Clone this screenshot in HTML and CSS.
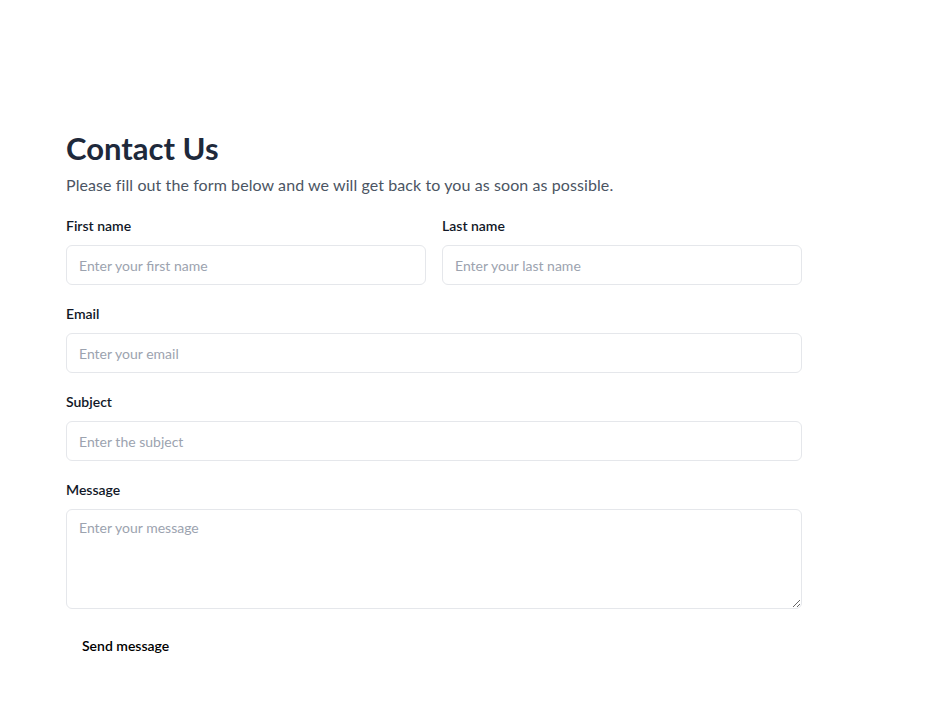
FILE: index.html
```html
<!DOCTYPE html>
<html lang="en">
<head>
<meta charset="utf-8">
<title>Contact Us</title>
<link rel="stylesheet" href="styles.css">
</head>
<body>
<main class="page">
  <h1 class="title">Contact Us</h1>
  <p class="subtitle">Please fill out the form below and we will get back to you as soon as possible.</p>
  <form class="form">
    <div class="row">
      <div class="field">
        <label class="label" for="first">First name</label>
        <input class="input" id="first" type="text" placeholder="Enter your first name">
      </div>
      <div class="field">
        <label class="label" for="last">Last name</label>
        <input class="input" id="last" type="text" placeholder="Enter your last name">
      </div>
    </div>
    <div class="field">
      <label class="label" for="email">Email</label>
      <input class="input" id="email" type="email" placeholder="Enter your email">
    </div>
    <div class="field">
      <label class="label" for="subject">Subject</label>
      <input class="input" id="subject" type="text" placeholder="Enter the subject">
    </div>
    <div class="field">
      <label class="label" for="message">Message</label>
      <textarea class="input textarea" id="message" placeholder="Enter your message"></textarea>
    </div>
    <div class="actions">
      <button class="button" type="submit">Send message</button>
    </div>
  </form>
</main>
</body>
</html>
```

FILE: styles.css
```css
* { box-sizing: border-box; }

html, body {
  margin: 0;
  padding: 0;
  background: #ffffff;
}

body {
  font-family: "Lato", "Noto Sans", sans-serif;
  color: #111827;
}

.page {
  width: 736px;
  margin: 0 0 0 66px;
  padding-top: 130px;
}

.title {
  margin: 0;
  font-size: 31px;
  line-height: 36px;
  font-weight: 700;
  color: #1e293b;
}

.subtitle {
  margin: 7px 0 0;
  font-size: 16px;
  line-height: 24px;
  letter-spacing: 0.09px;
  color: #4b5563;
}

.form {
  margin-top: 19px;
  display: flex;
  flex-direction: column;
  gap: 19px;
}

.row {
  display: grid;
  grid-template-columns: 1fr 1fr;
  gap: 16px;
}

.field {
  display: flex;
  flex-direction: column;
  gap: 9px;
}

.label {
  font-size: 14px;
  line-height: 20px;
  font-weight: 600;
  color: #111827;
}

.input {
  height: 40px;
  width: 100%;
  padding: 0 12px;
  border: 1px solid #e5e7eb;
  border-radius: 6px;
  font-family: inherit;
  font-size: 14px;
  color: #111827;
  background: #ffffff;
  outline: none;
}

.input::placeholder {
  color: #9ca3af;
}

.textarea {
  height: 100px;
  padding: 8px 12px;
  line-height: 20px;
  resize: vertical;
}

.actions {
  display: flex;
  margin-top: -3px;
}

.button {
  height: 40px;
  padding: 0 16px;
  border: none;
  background: transparent;
  font-family: inherit;
  font-size: 14px;
  font-weight: 600;
  color: #000000;
  cursor: pointer;
}
```
